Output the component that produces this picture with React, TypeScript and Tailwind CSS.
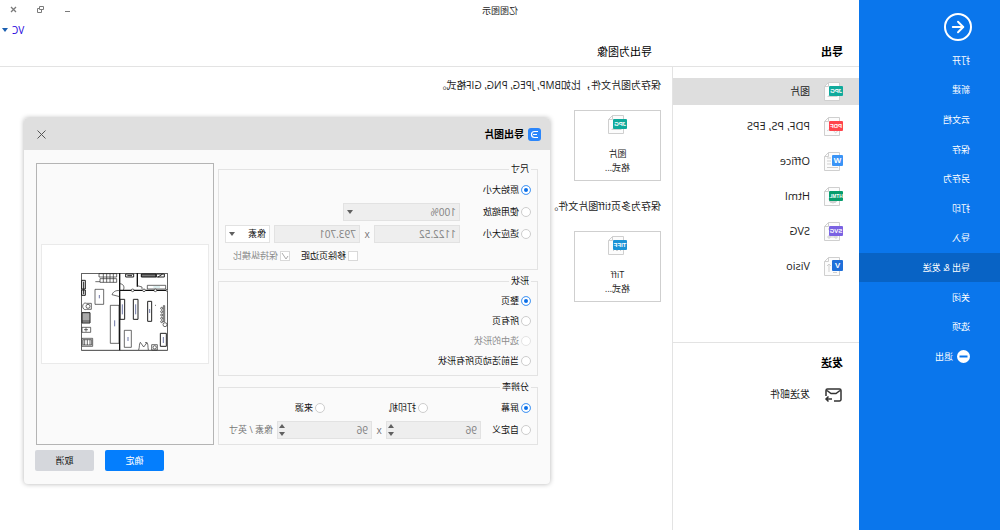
import type { ReactNode } from "react";
import { ArrowLeft } from "lucide-react";

const MENU = ["打开", "新建", "云文档", "保存", "另存为", "打印", "导入", "导出 & 发送", "关闭", "选项"];
const ACTIVE = "导出 & 发送";

type Kind = "JPG" | "PDF" | "W" | "HTML" | "SVG" | "V" | "TIFF";

const FORMATS: { kind: Kind; label: string; size: string }[] = [
  { kind: "JPG", label: "图片", size: "text-[10px]" },
  { kind: "PDF", label: "PDF, PS, EPS", size: "text-[11px]" },
  { kind: "W", label: "Office", size: "text-[11px]" },
  { kind: "HTML", label: "Html", size: "text-[11px]" },
  { kind: "SVG", label: "SVG", size: "text-[11px]" },
  { kind: "V", label: "Visio", size: "text-[11px]" },
];

const BADGE: Record<Kind, { color: string; art: ReactNode }> = {
  JPG: { color: "#10aa9c", art: <path d="M5 15l3-3 2 2 2-3 4 4z" fill="#d4d4d4" stroke="none" /> },
  PDF: { color: "#ff454c", art: <path d="M5 13c2 4 3 3 4 1s5-2 7 0" /> },
  W: { color: "#3a94f7", art: <path d="M12 6h4M12 9h4M12 12h4M5 15.500h11" /> },
  HTML: { color: "#079d6c", art: <circle cx="10" cy="12" r="4" fill="#d4d4d4" /> },
  SVG: { color: "#7a62e2", art: <path d="M6 14h2v2H6zM13 14h2v2h-2zM8 15h5M14 6v2" /> },
  V: { color: "#1f6fd9", art: <path d="M14 7v8M12 9l2-2 2 2M6 15.500h4" /> },
  TIFF: { color: "#1c93d6", art: <path d="M6 15l2-2 2 2 2-2 2 2" /> },
};

function FileIcon({ kind }: { kind: Kind }) {
  const { color, art } = BADGE[kind];
  const square = kind.length === 1;
  return (
    <svg
      width="19"
      height="19"
      viewBox="0 0 19 19"
      className="shrink-0 font-['Liberation_Sans',sans-serif]"
      aria-hidden="true"
    >
      <g fill="none" stroke="#cfcfcf">
        <path d="M3.500.5h11l4 4v14h-15z" fill="#fcfcfc" />
        <path d="M14.500.5v4h4" />
        {art}
      </g>
      <rect x="0" y={square ? 3 : 4} width={square ? 11 : 14} height={square ? 11 : 10} rx="1" fill={color} />
      <text
        x={square ? 5.5 : 7}
        y={square ? 11 : 11.2}
        textAnchor="middle"
        fill="#fff"
        fontWeight="700"
        fontSize={square ? 8 : kind === "HTML" ? 4.8 : 6}
      >
        {kind}
      </text>
    </svg>
  );
}

function Caret({ className = "" }: { className?: string }) {
  return (
    <svg width="6" height="4" viewBox="0 0 6 4" className={className} fill="currentColor" aria-hidden="true">
      <path d="M0 0h6L3 4z" />
    </svg>
  );
}

const RADIO =
  "size-[10px] shrink-0 appearance-none rounded-full border border-[#cdcdcd] bg-white checked:border-[#5ba3f5] checked:bg-[#0a6fe8] checked:shadow-[inset_0_0_0_2px_white] disabled:border-[#e4e4e4]";
const CHECK = "size-[10px] shrink-0 appearance-none border border-[#d9d9d9] bg-white";
const FIELD = "h-[18px] border border-[#e2e2e2] bg-[#eeeeee] text-[10px] text-[#808080]";

function Radio(props: { name: string; label: string; checked?: boolean; disabled?: boolean; className?: string }) {
  return (
    <label className={`flex items-center gap-[2px] ${props.disabled ? "text-[#8c8c8c]" : ""} ${props.className ?? ""}`}>
      <input type="radio" name={props.name} defaultChecked={props.checked} disabled={props.disabled} className={RADIO} />
      {props.label}
    </label>
  );
}

function Group({ title, className, children }: { title: string; className: string; children: ReactNode }) {
  return (
    <fieldset className="border border-[#e3e3e3] px-[6px]">
      <legend className="px-[2px] leading-[12px]">{title}</legend>
      <div className={className}>{children}</div>
    </fieldset>
  );
}

function Spin({ label }: { label: string }) {
  return (
    <div className="relative">
      <input disabled aria-label={label} inputMode="numeric" defaultValue="96" className={`${FIELD} w-[95px] pl-[3px]`} />
      <div className="absolute top-[3px] right-[2px] flex flex-col gap-1 text-[#606060]">
        <Caret className="rotate-180" />
        <Caret />
      </div>
    </div>
  );
}

function FloorPlan() {
  return (
    <svg width="87" height="78" viewBox="0 0 261 234" fill="none" stroke="#222" strokeWidth="2" role="img" aria-label="预览">
      <path d="M1 1h259v231H1z" stroke="#444" strokeWidth="3" />
      <path d="M145 0v232M0 52h144M92 0v41" stroke="#111" strokeWidth="4" />
      {/* stairs and top counters */}
      <path d="M154 2h53v10h-53zM154 17h50v11h-50zM164 2v26M174 2v26M184 2v26M194 2v26M204 26h14" />
      <path d="M36 3h44v9H36z" fill="#777" stroke="#111" strokeWidth="3" />
      <path d="M11 3h24v9H11zM103 3h24v9h-24zM16 3l14 9M108 8h14" strokeWidth="3" />
      <path d="M7 37h55v11H7z" />
      <g fill="#fff">
        <circle cx="38" cy="52" r="4" />
        <circle cx="72" cy="52" r="4" />
        <circle cx="106" cy="52" r="4" />
        <circle cx="3" cy="52" r="3" />
      </g>
      <path d="M92 38l-14 4v6M145 53c12-2 20 4 23 12l-23 6M144 32c-12 2-14 10-10 20" />
      {/* right room furniture */}
      <path d="M248 22h11v26h-11zM248 51h11v16h-11zM253 26v38" strokeWidth="3" />
      <path d="M193 49h26v45h-26z" />
      <path d="M230 91h14c16-6 16 24 0 18h-14z" />
      <circle cx="240" cy="100" r="6" />
      <path d="M234 119h24v31h-24z" fill="#aaa" strokeWidth="3" />
      <path d="M234 144h24M232 163h26v15h-26zM240 170h12M246 164v12M226 196h32v24h-32zM234 200v16M242 200v16M250 200v16M229 200h26v16h-26z" />
      <path d="M147 97h26v114h-26z" />
      {/* left room tables */}
      <path d="M130 79h14v60h-14zM90 79h14v60H90zM49 85h12v60H49z" strokeWidth="3" />
      <path d="M110 172h21v51h-21z" />
      <path d="M5 181h18v39H5z" strokeWidth="3" />
      <path d="M10 98h4v48h-4z" />
      <circle cx="19" cy="106" r="3" />
      <circle cx="19" cy="116" r="3" />
      <circle cx="19" cy="126" r="3" />
      <circle cx="19" cy="136" r="3" />
      <circle cx="19" cy="146" r="3" />
      <circle cx="9" cy="155" r="6" />
      <path d="M32 215h17v16H32z" />
      <circle cx="40" cy="223" r="5" />
      <path d="M59 231c2-10 0-18 4-22l10 13 10-14c4 6 2 14 5 23M63 209l6 0M36 97h3" />
      <path d="M206 66v10M160 142v18M120 192v12M97 94v30M137 94v30M55 108v12M14 192v18" stroke="#6f78a8" strokeWidth="3" />
      <path d="M24 42h20" stroke="#9cc" />
    </svg>
  );
}

function ExportDialog() {
  return (
    <div
      role="dialog"
      aria-label="导出图片"
      className="absolute top-[118px] right-6 w-[526px] rounded bg-[#fafafa] pb-[13px] text-[9px] text-[#111] shadow-[0_0_5px_rgba(0,0,0,0.3)]"
    >
      <div className="flex h-8 items-center gap-1 rounded-t bg-[#dfdfdf] pr-[13px] pl-[9px]">
        <svg width="13" height="13" viewBox="0 0 13 13" aria-hidden="true">
          <rect width="13" height="13" rx="3" fill="#2b86fb" />
          <path d="M3 3.500h3.500a3 3 0 0 1 0 6H3M4 6.500h4" fill="none" stroke="#fff" strokeWidth="1.200" />
        </svg>
        <h2 className="flex-1 text-[10px] font-bold text-black">导出图片</h2>
        <button aria-label="关闭对话框" className="text-[#555]">
          <svg width="9" height="9" viewBox="0 0 9 9" stroke="currentColor">
            <path d="M.5.5l8 8M8.500.5l-8 8" />
          </svg>
        </button>
      </div>

      <div className="flex gap-1 px-3 pt-[13px]">
        <div className="flex w-80 flex-col gap-[5px]">
          <Group title="尺寸" className="flex flex-col gap-1 pt-[6px] pb-1">
            <Radio name="size" label="原始大小" checked className="h-[18px]" />
            <div className="flex items-center">
              <Radio name="size" label="使用缩放" className="w-[71px]" />
              <div className="relative">
                <select disabled aria-label="缩放" className={`${FIELD} w-[117px] appearance-none pl-[3px] opacity-100`}>
                  <option>100%</option>
                </select>
                <Caret className="absolute top-[7px] right-1 text-[#606060]" />
              </div>
            </div>
            <div className="flex items-center">
              <Radio name="size" label="适应大小" className="w-[71px]" />
              <input disabled aria-label="宽度" defaultValue="1122.52" className={`${FIELD} w-[86px] pl-[3px]`} />
              <span className="w-[14px] text-center text-[10px] text-[#777]">x</span>
              <input disabled aria-label="高度" defaultValue="793.701" className={`${FIELD} w-[86px] pl-[3px]`} />
              <div className="relative ml-1">
                <select aria-label="单位" className="h-[18px] w-[45px] appearance-none border border-[#e2e2e2] bg-white pl-[3px]">
                  <option>像素</option>
                </select>
                <Caret className="absolute top-[7px] right-1 text-[#606060]" />
              </div>
            </div>
            <div className="flex h-[18px] items-center pl-[173px]">
              <label className="flex w-[68px] items-center gap-[2px]">
                <input type="checkbox" className={CHECK} />
                移除页边距
              </label>
              <label className="flex items-center gap-[2px] text-[#8c8c8c]">
                <span className="relative flex">
                  <input type="checkbox" defaultChecked disabled className={CHECK} />
                  <svg width="10" height="10" viewBox="0 0 10 10" className="absolute inset-0" fill="none" stroke="#aaa">
                    <path d="M2 5l2 3 4-6" />
                  </svg>
                </span>
                保持纵横比
              </label>
            </div>
          </Group>

          <Group title="形状" className="pt-1 pb-1">
            <Radio name="shape" label="整页" checked className="h-5" />
            <Radio name="shape" label="所有页" className="h-5" />
            <Radio name="shape" label="选中的形状" disabled className="h-5" />
            <Radio name="shape" label="当前活动页所有形状" className="h-5" />
          </Group>

          <Group title="分辨率" className="flex flex-col gap-1 pt-[6px] pb-[5px]">
            <div className="flex h-[18px]">
              <Radio name="dpi" label="屏幕" checked className="w-[103px]" />
              <Radio name="dpi" label="打印机" className="w-[103px]" />
              <Radio name="dpi" label="来源" />
            </div>
            <div className="flex items-center">
              <Radio name="dpi" label="自定义" className="w-[50px]" />
              <Spin label="水平分辨率" />
              <span className="w-[14px] text-center text-[10px] text-[#777]">x</span>
              <Spin label="垂直分辨率" />
              <span className="ml-1 text-[#777]">像素 / 英寸</span>
            </div>
          </Group>
        </div>

        <div className="flex flex-1 items-center justify-center border border-[#b4b4b4]">
          <div className="flex h-[120px] w-[168px] items-center justify-center border border-[#eaeaea] bg-white pt-4">
            <FloorPlan />
          </div>
        </div>
      </div>

      <div className="mt-[5px] flex justify-end gap-[11px] pr-[11px]">
        <button className="h-[21px] w-[59px] rounded-xs bg-[#047efd] text-white">确定</button>
        <button className="h-[21px] w-[59px] rounded-xs bg-[#d5d7dc]">取消</button>
      </div>
    </div>
  );
}

function FormatCard({ kind, name }: { kind: Kind; name: string }) {
  return (
    <button className="flex h-[71px] w-[87px] flex-col items-center border border-[#cfcfcf] pt-1 leading-[14px]">
      <FileIcon kind={kind} />
      <span className="mt-[13px]">{name}</span>
      <span>格式...</span>
    </button>
  );
}

export default function App() {
  // the whole window is drawn flipped left to right
  return (
    <div className="relative flex min-h-screen -scale-x-100 overflow-hidden bg-white font-['Open_Sans','Noto_Sans_CJK_SC',sans-serif] text-[9px] text-[#1c1c1c]">
      <aside className="w-[141px] shrink-0 bg-[#0a76ec] text-white">
        <button aria-label="返回" className="mt-[13px] ml-7 flex size-7 items-center justify-center rounded-full border-2 border-white">
          <ArrowLeft size={18} strokeWidth={2.5} />
        </button>
        <nav className="mt-[5px] flex h-[325px] flex-col justify-between">
          {MENU.map((item) => (
            <a
              key={item}
              href="#"
              className={`flex h-[29px] items-center pl-[30px] ${item === ACTIVE ? "bg-[#0863c5]" : ""}`}
            >
              {item}
            </a>
          ))}
          <a href="#" className="flex h-[29px] items-center gap-1 pl-[30px]">
            <svg width="13" height="13" viewBox="0 0 13 13" aria-hidden="true">
              <circle cx="6.500" cy="6.500" r="6.500" fill="#fff" />
              <path d="M2.500 6.500h8" stroke="#0a76ec" strokeWidth="2" />
            </svg>
            退出
          </a>
        </nav>
      </aside>

      <div className="flex min-w-0 flex-1 flex-col">
        <header className="border-b border-[#e3e3e3]">
          <div className="flex h-[22px] items-center">
            <h1 className="flex-1 text-center">亿图图示</h1>
            <div className="flex w-[141px] items-center justify-end gap-5 pr-[10px] pb-1 text-[#7a7a7a]">
              <button aria-label="最小化">
                <svg width="7" height="7" viewBox="0 0 7 7" stroke="currentColor">
                  <path d="M1 5.500h5" />
                </svg>
              </button>
              <button aria-label="还原">
                <svg width="7" height="7" viewBox="0 0 7 7" fill="none" stroke="currentColor">
                  <path d="M.5.5h4v3h-4zM2.500 3.500v3h4v-4h-2" />
                </svg>
              </button>
              <button aria-label="关闭窗口">
                <svg width="7" height="7" viewBox="0 0 7 7" stroke="currentColor" strokeWidth="1.300">
                  <path d="M1 1l5 5M6 1L1 6" />
                </svg>
              </button>
            </div>
          </div>
          <div className="flex h-4 justify-end pr-[2px]">
            <button className="flex items-center gap-1 text-[10px] text-[#2200dd]">
              VC
              <Caret className="text-[#1b5fb0]" />
            </button>
          </div>
          <div className="flex h-7 items-center text-[11px] text-black">
            <h2 className="w-[187px] pl-4 font-bold">导出</h2>
            <h3 className="pl-5">导出为图像</h3>
          </div>
        </header>

        <div className="flex flex-1">
          <div className="w-[187px] shrink-0 border-r border-[#e3e3e3]">
            <ul className="flex flex-col gap-2 border-b border-[#e3e3e3] pt-[11px] pb-[62px]">
              {FORMATS.map((f) => (
                <li key={f.kind}>
                  <a
                    href="#"
                    className={`flex h-[27px] items-center gap-[14px] pl-4 ${f.size} ${f.kind === "JPG" ? "bg-[#dedede]" : ""}`}
                  >
                    <FileIcon kind={f.kind} />
                    {f.label}
                  </a>
                </li>
              ))}
            </ul>
            <h2 className="mt-3 pl-4 text-[11px] leading-4 font-bold text-black">发送</h2>
            <a href="#" className="mt-[10px] flex h-[27px] items-center gap-[14px] pl-4 text-[10px]">
              <svg width="19" height="16" viewBox="0 0 19 16" fill="none" stroke="#333" strokeWidth="1.500" aria-hidden="true">
                <path d="M2 9V3.500A1.500 1.500 0 0 1 3.500 2h12A1.500 1.500 0 0 1 17 3.500V9M2 9v3.500A1.500 1.500 0 0 0 3.500 14H9M3 3.500l4 3h5l4-3M11 12h6M14.500 9.500L17 12l-2.500 2.500" />
              </svg>
              发送邮件
            </a>
          </div>

          <main className="flex flex-col items-start pt-[11px] pl-[11px]">
            <p className="text-[10px] leading-[14px]">保存为图片文件，比如BMP, JPEG, PNG, GIF格式。</p>
            <div className="mt-[18px] mb-[18px]">
              <FormatCard kind="JPG" name="图片" />
            </div>
            <p className="text-[10px] leading-[14px]">保存为多页tiff图片文件。</p>
            <div className="mt-[18px]">
              <FormatCard kind="TIFF" name="Tiff" />
            </div>
          </main>
        </div>
      </div>

      <ExportDialog />
    </div>
  );
}
